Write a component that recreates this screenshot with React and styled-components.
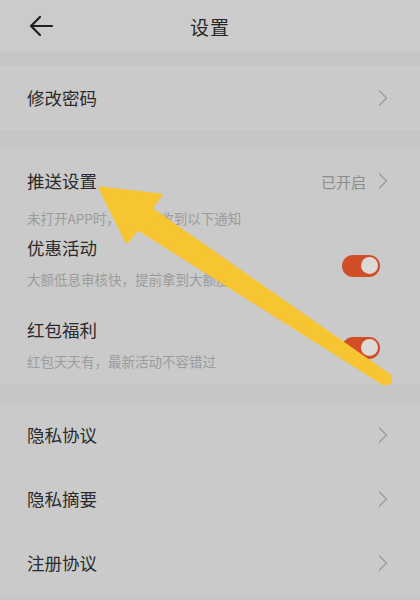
import React from 'react'
import styled, { createGlobalStyle } from 'styled-components'

const GlobalStyle = createGlobalStyle`
  html, body {
    margin: 0;
    padding: 0;
    background: #c6c6c6;
  }
  body {
    font-family: "Noto Sans CJK SC", "Noto Sans", "Liberation Sans", sans-serif;
    -webkit-font-smoothing: antialiased;
  }
`

const Page = styled.div`
  position: relative;
  width: 420px;
  height: 600px;
  overflow: hidden;
  background: #c6c6c6;
`

const Header = styled.header`
  height: 52px;
  display: flex;
  align-items: center;
  justify-content: center;
  position: relative;
  background: #cbcbcb;
`

const BackButton = styled.button`
  position: absolute;
  left: 26px;
  top: 12px;
  width: 30px;
  height: 28px;
  padding: 0;
  border: 0;
  background: transparent;
  display: flex;
  align-items: center;
  justify-content: center;
`

const Title = styled.h1`
  margin: 0;
  font-size: 19px;
  font-weight: 400;
  color: #262626;
  letter-spacing: 1px;
`

const Group = styled.section`
  background: #cacaca;
  margin-top: ${p => p.gap}px;
`

const Row = styled.div`
  height: 64px;
  display: flex;
  align-items: center;
  justify-content: space-between;
  padding: 0 32px 0 27px;
  border-bottom: ${p => (p.last ? 'none' : '1px solid #c6c6c6')};
  box-sizing: border-box;
`

const Label = styled.span`
  font-size: 17.5px;
  color: #2b2b2b;
  line-height: 22px;
`

const Right = styled.div`
  display: flex;
  align-items: center;
  gap: 12px;
`

const Status = styled.span`
  font-size: 15px;
  color: #8c8c8c;
`

const PushSection = styled.section`
  background: #cacaca;
  margin-top: 18px;
  padding: 22px 0 15px;
`

const PushHead = styled.div`
  display: flex;
  align-items: center;
  justify-content: space-between;
  padding: 0 32px 0 27px;
  height: 22px;
`

const Note = styled.p`
  margin: 17px 0 0;
  padding: 0 27px;
  font-size: 13.5px;
  line-height: 18px;
  color: #9c9c9c;
`

const Item = styled.div`
  display: flex;
  align-items: center;
  justify-content: space-between;
  padding: 0 40px 0 27px;
  margin-top: ${p => p.top}px;
`

const ItemText = styled.div`
  display: flex;
  flex-direction: column;
  gap: 11px;
`

const Sub = styled.span`
  font-size: 13.5px;
  line-height: 18px;
  color: #9c9c9c;
`

const Toggle = styled.div`
  width: 38px;
  height: 22px;
  border-radius: 11px;
  background: #d14f26;
  display: flex;
  align-items: center;
  justify-content: flex-end;
  padding-right: 2px;
  box-sizing: border-box;
  margin-top: 6px;
`

const Knob = styled.span`
  width: 17px;
  height: 17px;
  border-radius: 50%;
  background: #dcd9d6;
`

const Overlay = styled.svg`
  position: absolute;
  left: 0;
  top: 0;
  pointer-events: none;
`

const Chevron = () => (
  <svg width="10" height="16" viewBox="0 0 10 16">
    <path d="M1.5 1 L8.5 8 L1.5 15" fill="none" stroke="#9e9e9e" strokeWidth="1.4" strokeLinecap="round" strokeLinejoin="round" />
  </svg>
)

const BackArrow = () => (
  <svg width="26" height="22" viewBox="0 0 26 22">
    <path d="M3 11 H24 M12 2 L3 11 L12 20" fill="none" stroke="#1f1f1f" strokeWidth="2.2" strokeLinecap="round" strokeLinejoin="round" />
  </svg>
)

const linkRows = ['隐私协议', '隐私摘要', '注册协议']

const items = [
  { title: '优惠活动', sub: '大额低息审核快，提前拿到大额度', top: 10 },
  { title: '红包福利', sub: '红包天天有，最新活动不容错过', top: 31 },
]

export default function App() {
  return (
    <Page>
      <GlobalStyle />
      <Header>
        <BackButton><BackArrow /></BackButton>
        <Title>设置</Title>
      </Header>

      <Group gap={14}>
        <Row last>
          <Label>修改密码</Label>
          <Chevron />
        </Row>
      </Group>

      <PushSection>
        <PushHead>
          <Label>推送设置</Label>
          <Right>
            <Status>已开启</Status>
            <Chevron />
          </Right>
        </PushHead>
        <Note>未打开APP时，仍可接收到以下通知</Note>
        {items.map(it => (
          <Item key={it.title} top={it.top}>
            <ItemText>
              <Label>{it.title}</Label>
              <Sub>{it.sub}</Sub>
            </ItemText>
            <Toggle><Knob /></Toggle>
          </Item>
        ))}
      </PushSection>

      <Group gap={18}>
        {linkRows.map((t, i) => (
          <Row key={t} last={i === linkRows.length - 1}>
            <Label>{t}</Label>
            <Chevron />
          </Row>
        ))}
      </Group>

      <Overlay width="420" height="600" viewBox="0 0 420 600">
        <polygon
          points="100,188 161,195 150.6,208.5 389.8,375.8 384.2,384.2 137.4,228.5 127,242"
          fill="#f7c532"
          stroke="#f7c532"
          strokeWidth="3"
          strokeLinejoin="round"
        />
        <circle cx="387" cy="380" r="5" fill="#f7c532" />
      </Overlay>
    </Page>
  )
}
